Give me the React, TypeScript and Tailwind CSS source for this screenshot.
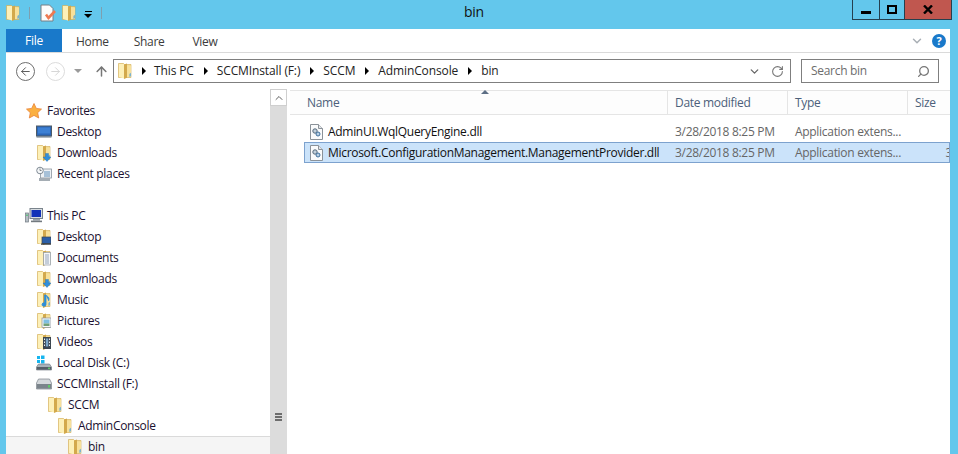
import type { ReactNode } from "react";
import { ArrowLeft, ArrowRight, ArrowUp, ChevronDown, ChevronUp, RotateCw, Search } from "lucide-react";

const ui = "font-['Open_Sans','Noto_Sans',sans-serif]";

function Folder({ overlay }: { overlay?: ReactNode }) {
  return (
    <svg width="14" height="18" viewBox="0 0 14 18" className="shrink-0">
      <path d="M.5 1.500h5l1 1H13v13H.5z" fill="#f3d98a" stroke="#d2ac55" strokeWidth="0.6" />
      <path d="M1 2h5v14.500L1 15z" fill="#fdf0b8" />
      <path d="M6 2.500l3-1v14.200L6 17z" fill="#d3a94c" />
      <path d="M9 3.500h4V15H9z" fill="#f7e09a" />
      <path d="M11.500 12l1.300-1.200v3.500l-1.300.6z" fill="#5aa7dd" />
      {overlay}
    </svg>
  );
}

const downArrow = <path d="M8.500 9.500h3v3.500H14L10 17.500 6 13h2.500z" fill="#2f8fdc" stroke="#1b6cb0" strokeWidth="0.4" />;

function DesktopMini() {
  return (
    <g>
      <rect x="5" y="9" width="9" height="6.500" fill="#2b5fa8" stroke="#3a4650" strokeWidth="0.7" />
      <rect x="4" y="15.500" width="10" height="1.200" fill="#2d3338" />
    </g>
  );
}

function DocMini() {
  return (
    <g>
      <rect x="6.500" y="3.500" width="7" height="12.500" fill="#f4f6f8" stroke="#8f99a3" strokeWidth="0.7" />
      <path d="M8 6h4M8 8h4M8 10h4M8 12h4M8 14h4" stroke="#7d93aa" strokeWidth="0.8" />
    </g>
  );
}

function MusicMini() {
  return <path d="M9 4v9.500a2 1.700 0 1 1-1.400-1.600V4zM9 4.500c2.600 1 3.800 3 2.500 5.500" fill="#2d8ed8" stroke="#2d8ed8" strokeWidth="0.8" />;
}

function PictureMini() {
  return (
    <g>
      <rect x="5" y="6" width="9" height="9.500" fill="#f5f6f7" stroke="#87919b" strokeWidth="0.7" />
      <rect x="6.500" y="7.500" width="6" height="4" fill="#7fbfe2" />
      <rect x="6.500" y="11.500" width="6" height="2.500" fill="#70a078" />
    </g>
  );
}

function VideoMini() {
  return (
    <g>
      <rect x="6" y="4" width="8" height="12" fill="#3c4650" />
      <path d="M7 5.500h1V7H7zM7 8.500h1V10H7zM7 11.500h1V13H7zM12 5.500h1V7h-1zM12 8.500h1V10h-1zM12 11.500h1V13h-1z" fill="#e8edf0" />
      <rect x="8.800" y="5.500" width="2.500" height="8" fill="#7aa6c9" />
    </g>
  );
}

function Star() {
  return (
    <svg width="16" height="16" viewBox="0 0 16 16" className="shrink-0">
      <path d="M8 .5l2.300 4.900 5.200.7-3.800 3.600 1 5.300L8 12.400 3.300 15l1-5.300L.5 6.100l5.200-.7z" fill="#fbb040" stroke="#e8833a" strokeWidth="0.8" />
    </svg>
  );
}

function DesktopIcon() {
  return (
    <svg width="16" height="16" viewBox="0 0 16 16" className="shrink-0">
      <rect x="0.500" y="2" width="15" height="10" fill="#2c67b8" stroke="#4d5a66" />
      <rect x="2" y="3.500" width="12" height="6" fill="#3d80d4" />
      <rect x="0.500" y="12" width="15" height="1.600" fill="#7c8894" />
    </svg>
  );
}

function RecentIcon() {
  return (
    <svg width="16" height="16" viewBox="0 0 16 16" className="shrink-0">
      <rect x="4.500" y="3" width="11" height="9" fill="#eef2f5" stroke="#8b959e" strokeWidth="0.8" />
      <path d="M8 6h6M8 8h6M8 10h6" stroke="#5e8fba" />
      <circle cx="4" cy="4.500" r="3.300" fill="#f5f7f8" stroke="#7f8a94" />
      <path d="M4 2.500v2h1.600" stroke="#55606a" strokeWidth="0.7" fill="none" />
      <rect x="3" y="12" width="11" height="3" fill="#a5adb4" />
    </svg>
  );
}

function PcIcon() {
  return (
    <svg width="18" height="16" viewBox="0 0 18 16" className="shrink-0">
      <rect x="0.500" y="5" width="3" height="9" fill="#b6bec5" stroke="#6f7880" strokeWidth="0.7" />
      <rect x="1.300" y="6.500" width="1.400" height="1.500" fill="#45c46a" />
      <rect x="5" y="0.500" width="12.500" height="10" fill="#d8dde1" stroke="#7a848c" />
      <rect x="6.500" y="2" width="9.500" height="7" fill="#1332b8" />
      <rect x="8" y="11" width="7" height="1.600" fill="#98a1a9" />
      <rect x="6" y="12.600" width="11" height="1.600" fill="#72797f" />
    </svg>
  );
}

function WinDiskIcon() {
  return (
    <svg width="16" height="16" viewBox="0 0 16 16" className="shrink-0">
      <path d="M1 1h3v3H1zM5 .500h3.500v3.500H5zM1 5h3v3H1zM5 5h3.500v3.500H5z" fill="#16b5ef" />
      <path d="M2.500 9h11L15.500 12v3H.500v-3z" fill="#a9b2b9" stroke="#6b747c" strokeWidth="0.6" />
      <rect x="0.800" y="12" width="14.400" height="2.700" fill="#566069" />
      <rect x="12" y="12.600" width="2" height="1.500" fill="#5fc968" />
    </svg>
  );
}

function DiskIcon() {
  return (
    <svg width="16" height="12" viewBox="0 0 16 12" className="shrink-0">
      <path d="M2.500 1h11L15.500 5v6H.500V5z" fill="#d4d8db" stroke="#7b8389" strokeWidth="0.7" />
      <rect x="0.900" y="6" width="14.200" height="4.700" fill="#7b848b" />
      <rect x="12" y="7" width="2" height="2.500" fill="#5fc968" />
    </svg>
  );
}

function DllIcon() {
  return (
    <svg width="13" height="16" viewBox="0 0 13 16" className="shrink-0">
      <path d="M.5.500h8l4 4v11H.500z" fill="#fafbfc" stroke="#8b9299" />
      <path d="M8.500.500v4h4" fill="#e3e6e9" stroke="#8b9299" />
      <circle cx="5" cy="7" r="2.200" fill="#c2d0dc" stroke="#55687a" />
      <circle cx="8" cy="10" r="2" fill="#b8cfe4" stroke="#3f6f9c" />
    </svg>
  );
}

function CheckDocIcon() {
  return (
    <svg width="16" height="18" viewBox="0 0 16 18">
      <path d="M1 1h8.500L13 4.500V17H1z" fill="#fcfcfc" stroke="#777e85" />
      <path d="M6 10.500l2.500 3.500L15 7" fill="none" stroke="#ee7a52" strokeWidth="2.600" />
    </svg>
  );
}

function TreeRow({ indent, icon, label, selected }: { indent: string; icon: ReactNode; label: string; selected?: boolean }) {
  return (
    <div className={`flex h-[21px] shrink-0 items-center gap-[5px] border-y ${indent} ${selected ? "border-[#dadada] bg-[#f5f5f5]" : "border-transparent"}`}>
      <span className="flex w-4 shrink-0 justify-center">{icon}</span>
      <span className="text-[12px] leading-none whitespace-nowrap text-[#1a1030]">{label}</span>
    </div>
  );
}

function Crumb({ label }: { label: string }) {
  return (
    <>
      <span className="whitespace-nowrap text-[12px] leading-none tracking-[-0.12px] text-[#222]">{label}</span>
      <span className="mr-[9px] ml-[10px] h-0 w-0 border-y-[4px] border-l-[4px] border-y-transparent border-l-black" />
    </>
  );
}

function HeaderCell({ label, className }: { label: string; className: string }) {
  return (
    <div className={`flex h-full items-center border-r border-[#e5e5e5] text-[12px] text-[#4c607a] ${className}`}>
      {label}
    </div>
  );
}

function FileRow({ name, selected }: { name: string; selected?: boolean }) {
  return (
    <div className={`flex h-[21px] items-center overflow-hidden border ${selected ? "border-[#7da2ce] bg-[#cbe3fa]" : "border-transparent"}`}>
      <span className="flex w-[23px] shrink-0 pl-[5px]"><DllIcon /></span>
      <span className="w-[347px] shrink-0 text-[12px] leading-none whitespace-nowrap text-[#111]">{name}</span>
      <span className="w-[120px] shrink-0 text-[12px] leading-none text-[#666]">3/28/2018 8:25 PM</span>
      <span className="w-[120px] shrink-0 text-[12px] leading-none text-[#666]">Application extens...</span>
      {selected && <span className="-mr-[3px] ml-auto text-[12px] leading-none text-[#666]">3</span>}
    </div>
  );
}

export default function App() {
  return (
    <div className={`flex h-[454px] w-[958px] flex-col overflow-hidden bg-[#63c7ec] tracking-[-0.3px] ${ui}`}>
      {/* title bar */}
      <div className="grid h-[29px] shrink-0 grid-cols-[1fr_auto_1fr]">
        <div className="flex items-start pt-[4px] pl-[6px]">
          <Folder />
          <span className="mt-[3px] ml-[9px] h-[12px] w-px bg-[#7d9fb0]" />
          <span className="ml-[10px]"><CheckDocIcon /></span>
          <span className="ml-[6px]"><Folder /></span>
          <span className="mt-[7px] ml-[8px] flex flex-col items-center gap-[2px]">
            <span className="h-px w-[7px] bg-black" />
            <span className="h-0 w-0 border-x-[4px] border-t-[4px] border-x-transparent border-t-black" />
          </span>
          <span className="mt-[3px] ml-[9px] h-[12px] w-px bg-[#7d9fb0]" />
        </div>
        <div className="pt-[2px] pr-[10px] text-[14px] leading-[19px] text-[#111]">bin</div>
        <div className="flex justify-end pr-[6px]">
          <div className="flex h-[20px] border-x border-b border-[#25404f]">
            <div className="flex w-[27px] items-center justify-center border-r border-[#25404f] pt-[5px]">
              <span className="h-[3px] w-[10px] bg-black" />
            </div>
            <div className="flex w-[25px] items-center justify-center border-r border-[#25404f]">
              <span className="h-[9px] w-[10px] border-2 border-black" />
            </div>
            <div className="flex w-[46px] items-center justify-center bg-[#c0574f] text-[14px] leading-none font-bold text-black">
              <svg width="10" height="9" viewBox="0 0 10 9"><path d="M1 .5l8 8M9 .5l-8 8" stroke="#000" strokeWidth="2.400" /></svg>
            </div>
          </div>
        </div>
      </div>

      {/* window body */}
      <div className="ml-[6px] flex min-h-0 w-[944px] flex-1 flex-col bg-white">
        <div className="flex h-[24px] shrink-0 items-center border-b border-[#dadada] text-[12px] text-[#333]">
          <div className="flex h-full w-[56px] items-center justify-center bg-[#1979ca] text-white">File</div>
          <span className="ml-[14px] pt-[2px] text-[#3c3c3c]">Home</span>
          <span className="ml-[25px] pt-[2px] text-[#3c3c3c]">Share</span>
          <span className="ml-[28px] pt-[2px] text-[#3c3c3c]">View</span>
          <ChevronDown size={14} strokeWidth={2.500} className="mr-[8px] ml-auto text-[#a9afb5]" />
          <span className="mr-[4px] flex h-[14px] w-[14px] items-center justify-center rounded-full bg-[#1979ca] text-[11px] leading-none font-bold text-white">?</span>
        </div>

        <div className="flex h-[36px] shrink-0 items-center">
          <div className="ml-[10px] flex h-[19px] w-[19px] items-center justify-center rounded-full border border-[#6e6e6e]">
            <ArrowLeft size={13} strokeWidth={1.800} className="text-[#5a5a5a]" />
          </div>
          <div className="ml-[11px] flex h-[19px] w-[19px] items-center justify-center rounded-full border border-[#dcdcdc]">
            <ArrowRight size={13} strokeWidth={1.800} className="text-[#d6d6d6]" />
          </div>
          <span className="ml-[9px] h-0 w-0 border-x-[4px] border-t-[4px] border-x-transparent border-t-[#9a9a9a]" />
          <ArrowUp size={15} strokeWidth={2.400} className="ml-[12px] text-[#777]" />
          <div className="ml-[4px] flex h-[24px] w-[678px] items-center border border-[#7f7f7f] pl-[4px]">
            <Folder />
            <span className="mr-[8px] ml-[10px] h-0 w-0 border-y-[4px] border-l-[4px] border-y-transparent border-l-black" />
            <Crumb label="This PC" />
            <Crumb label="SCCMInstall (F:)" />
            <Crumb label="SCCM" />
            <Crumb label="AdminConsole" />
            <span className="whitespace-nowrap text-[12px] leading-none tracking-[-0.12px] text-[#222]">bin</span>
            <ChevronDown size={13} strokeWidth={2.400} className="ml-auto text-[#666]" />
            <RotateCw size={13} strokeWidth={2} className="mr-[6px] ml-[10px] text-[#777]" />
          </div>
          <div className="ml-[10px] flex h-[24px] w-[138px] items-center border border-[#7f7f7f] pl-[9px] text-[12px] text-[#6d6d6d]">
            Search bin
            <Search size={13} strokeWidth={2.400} className="mr-[8px] ml-auto -scale-x-100 text-[#777]" />
          </div>
        </div>

        <div className="flex min-h-0 flex-1">
          {/* nav pane */}
          <div className="flex w-[264px] shrink-0 flex-col overflow-hidden pt-[11px]">
            <TreeRow indent="pl-[20px]" icon={<Star />} label="Favorites" />
            <TreeRow indent="pl-[30px]" icon={<DesktopIcon />} label="Desktop" />
            <TreeRow indent="pl-[30px]" icon={<Folder overlay={downArrow} />} label="Downloads" />
            <TreeRow indent="pl-[30px]" icon={<RecentIcon />} label="Recent places" />
            <div className="h-[21px] shrink-0" />
            <TreeRow indent="pl-[20px]" icon={<PcIcon />} label="This PC" />
            <TreeRow indent="pl-[30px]" icon={<Folder overlay={<DesktopMini />} />} label="Desktop" />
            <TreeRow indent="pl-[30px]" icon={<Folder overlay={<DocMini />} />} label="Documents" />
            <TreeRow indent="pl-[30px]" icon={<Folder overlay={downArrow} />} label="Downloads" />
            <TreeRow indent="pl-[30px]" icon={<Folder overlay={<MusicMini />} />} label="Music" />
            <TreeRow indent="pl-[30px]" icon={<Folder overlay={<PictureMini />} />} label="Pictures" />
            <TreeRow indent="pl-[30px]" icon={<Folder overlay={<VideoMini />} />} label="Videos" />
            <TreeRow indent="pl-[30px]" icon={<WinDiskIcon />} label="Local Disk (C:)" />
            <TreeRow indent="pl-[30px]" icon={<DiskIcon />} label="SCCMInstall (F:)" />
            <TreeRow indent="pl-[41px]" icon={<Folder />} label="SCCM" />
            <TreeRow indent="pl-[51px]" icon={<Folder />} label="AdminConsole" />
            <TreeRow indent="pl-[61px]" icon={<Folder />} label="bin" selected />
          </div>

          {/* nav scrollbar */}
          <div className="flex w-[17px] shrink-0 flex-col bg-[#dcdcdc]">
            <div className="flex h-[17px] shrink-0 items-center justify-center border border-[#cfcfcf] bg-white">
              <ChevronUp size={12} strokeWidth={2} className="text-[#606060]" />
            </div>
            <div className="flex flex-1 items-end justify-center pb-[33px]">
              <span className="flex flex-col gap-[1px]">
                <span className="h-[2px] w-[7px] bg-[#6d6d6d]" />
                <span className="h-[2px] w-[7px] bg-[#6d6d6d]" />
                <span className="h-[2px] w-[7px] bg-[#6d6d6d]" />
              </span>
            </div>
          </div>

          {/* file list */}
          <div className="flex min-w-0 flex-1 flex-col pl-[3px]">
            <div className="relative mt-[1px] flex h-[25px] shrink-0 items-center border-y border-[#e5e5e5] bg-[#fdfdfd]">
              <span className="absolute -top-[1px] left-[191px] h-0 w-0 border-x-[4px] border-b-[4px] border-x-transparent border-b-[#5d6f85]" />
              <HeaderCell label="Name" className="w-[378px] pl-[17px]" />
              <HeaderCell label="Date modified" className="w-[120px] pl-[7px]" />
              <HeaderCell label="Type" className="w-[120px] pl-[7px]" />
              <span className="pl-[7px] text-[12px] text-[#4c607a]">Size</span>
            </div>
            <div className="flex flex-col pt-[6px] pl-[14px]">
              <FileRow name="AdminUI.WqlQueryEngine.dll" />
              <FileRow name="Microsoft.ConfigurationManagement.ManagementProvider.dll" selected />
            </div>
          </div>
        </div>
      </div>
    </div>
  );
}
